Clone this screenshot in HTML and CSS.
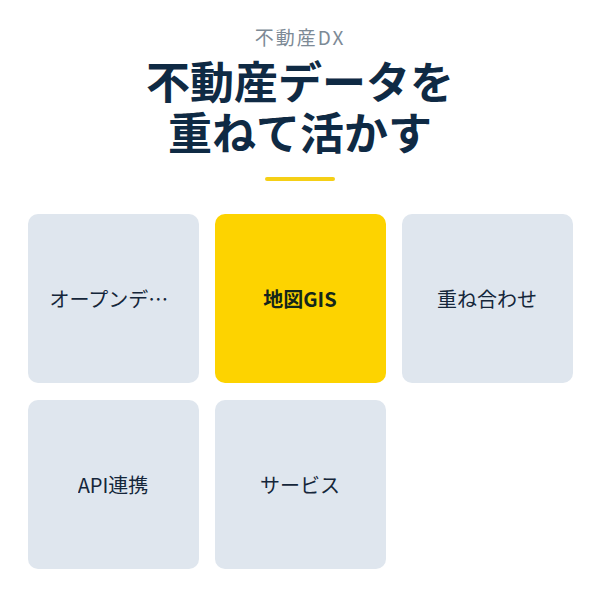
FILE: index.html
```html
<!DOCTYPE html>
<html lang="ja">
<head>
<meta charset="utf-8">
<link rel="stylesheet" href="styles.css">
</head>
<body>
<div class="page">
  <header class="hero">
    <div class="eyebrow">不動産DX</div>
    <h1 class="title">不動産データを<br>重ねて活かす</h1>
    <div class="bar"></div>
  </header>
  <div class="grid">
    <div class="tile"><span class="label">オープンデータ</span></div>
    <div class="tile tile-active"><span class="label">地図GIS</span></div>
    <div class="tile"><span class="label">重ね合わせ</span></div>
    <div class="tile"><span class="label">API連携</span></div>
    <div class="tile"><span class="label">サービス</span></div>
  </div>
</div>
</body>
</html>
```
FILE: styles.css
```css
html, body {
  margin: 0;
  padding: 0;
  background: #ffffff;
}
body {
  font-family: "Noto Sans CJK JP", "Noto Sans", sans-serif;
  color: #0f2a44;
}
.page {
  width: 545px;
  margin: 0 auto;
  padding-top: 25px;
}
.hero {
  display: flex;
  flex-direction: column;
  align-items: center;
  text-align: center;
}
.eyebrow {
  font-size: 19px;
  line-height: 24px;
  letter-spacing: 2px;
  color: #7d8a96;
}
.title {
  margin: 6px 0 0;
  font-size: 44px;
  line-height: 51px;
  font-weight: 700;
  color: #0f2a44;
}
.bar {
  width: 70px;
  height: 4px;
  border-radius: 2px;
  background: #f5cf16;
  margin-top: 20px;
}
.grid {
  margin-top: 33px;
  display: grid;
  grid-template-columns: repeat(3, 1fr);
  column-gap: 16px;
  row-gap: 17px;
}
.tile {
  box-sizing: border-box;
  aspect-ratio: 171 / 169;
  background: #dfe6ee;
  border-radius: 10px;
  display: flex;
  align-items: center;
  justify-content: center;
  padding: 0 22px;
  min-width: 0;
}
.label {
  font-size: 20px;
  line-height: 28px;
  color: #15263a;
  white-space: nowrap;
  overflow: hidden;
  text-overflow: ellipsis;
  max-width: 100%;
}
.tile-active {
  background: #fdd300;
}
.tile-active .label {
  font-weight: 700;
  color: #14261a;
}
```
